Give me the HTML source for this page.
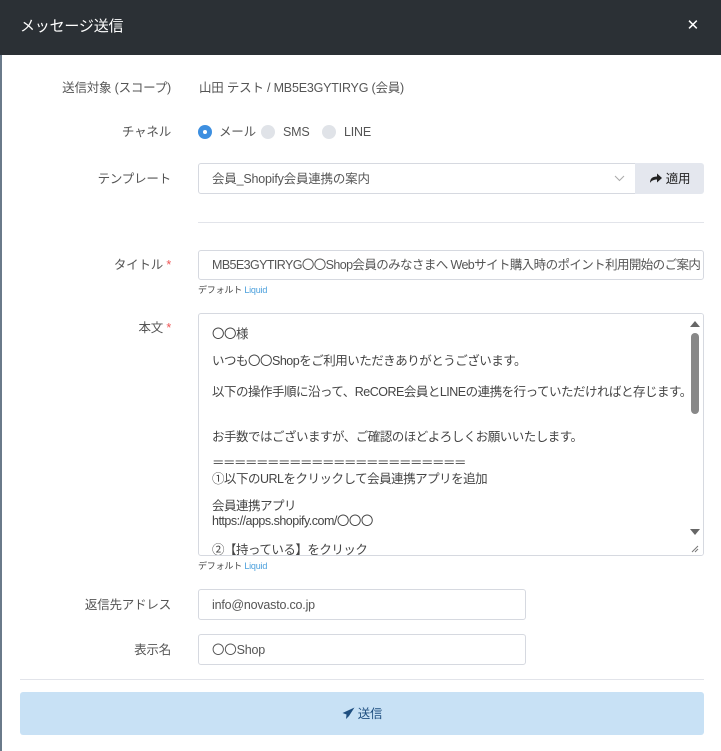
<!DOCTYPE html>
<html><head><meta charset="utf-8"><style>
*{box-sizing:border-box;margin:0;padding:0}
body{width:721px;height:751px;overflow:hidden;background:#fff;font-family:"Liberation Sans","Noto Sans CJK JP",sans-serif;font-size:12.5px;line-height:16px;color:#444;position:relative;letter-spacing:-0.2px}
.abs{position:absolute}
.hdr{left:0;top:0;width:721px;height:55px;background:#2b3035;color:#fff}
.lbl{right:550px;text-align:right;color:#555;white-space:nowrap}
.inp{border:1px solid #d6d9e0;border-radius:3px;background:#fff;padding-left:13px;display:flex;align-items:center;color:#555;overflow:hidden}
.req{color:#e55}
.hint{font-size:9px;color:#444;line-height:10px}
.hint span{color:#4a9fdc}
.ta div{position:absolute;left:13px;white-space:nowrap;color:#444}
</style></head><body>
<div class="abs" style="left:0;top:0;width:2px;height:751px;background:#6a7a8a"></div>
<div class="abs hdr"><div class="abs" style="left:20px;top:19px;font-size:15px">メッセージ送信</div><div class="abs" style="right:22px;top:18px;font-size:15px">✕</div></div>

<div class="abs lbl" style="top:80px">送信対象 (スコープ)</div>
<div class="abs" style="left:199px;top:80px;color:#555">山田 テスト / MB5E3GYTIRYG (会員)</div>

<div class="abs lbl" style="top:124px">チャネル</div>
<div class="abs" style="left:198px;top:125px;width:14px;height:14px;border-radius:50%;background:#3d8fe0"><div style="margin:5px;width:4px;height:4px;border-radius:50%;background:#fff"></div></div>
<div class="abs" style="left:219px;top:124px;color:#555">メール</div>
<div class="abs" style="left:261px;top:125px;width:14px;height:14px;border-radius:50%;background:#e0e3e8"></div>
<div class="abs" style="left:283px;top:124px;color:#555">SMS</div>
<div class="abs" style="left:322px;top:125px;width:14px;height:14px;border-radius:50%;background:#e0e3e8"></div>
<div class="abs" style="left:344px;top:124px;color:#555">LINE</div>

<div class="abs lbl" style="top:171px">テンプレート</div>
<div class="abs inp" style="left:198px;top:163px;width:438px;height:31px;border-radius:3px 0 0 3px">会員_Shopify会員連携の案内
<svg class="abs" style="right:10px;top:11px" width="11" height="7"><path d="M1 1l4.5 4.5L10 1" fill="none" stroke="#aaa"/></svg></div>
<div class="abs" style="left:635px;top:163px;width:69px;height:31px;background:#e4e7ee;border-radius:0 3px 3px 0;color:#222;display:flex;align-items:center;justify-content:center;gap:3px"><svg width="14" height="11" viewBox="0 0 14 11"><path d="M1 10C1 5 4 3.5 8 3.5V0.5L13 5L8 9.5V6.5C5 6.5 2.5 7.5 1 10Z" fill="#222"/></svg>適用</div>
<div class="abs" style="left:198px;top:222px;width:506px;height:1px;background:#e2e4ea"></div>

<div class="abs lbl" style="top:257px">タイトル <span class="req">*</span></div>
<div class="abs inp" style="left:198px;top:250px;width:506px;height:30px;white-space:nowrap;letter-spacing:-0.6px">MB5E3GYTIRYG〇〇Shop会員のみなさまへ Webサイト購入時のポイント利用開始のご案内</div>
<div class="abs hint" style="left:198px;top:285px">デフォルト <span>Liquid</span></div>

<div class="abs lbl" style="top:320px">本文 <span class="req">*</span></div>
<div class="abs inp ta" style="left:198px;top:313px;width:506px;height:243px;letter-spacing:-0.5px">
<div style="top:12px">〇〇様</div>
<div style="top:39px">いつも〇〇Shopをご利用いただきありがとうございます。</div>
<div style="top:70px">以下の操作手順に沿って、ReCORE会員とLINEの連携を行っていただければと存じます。</div>
<div style="top:115px">お手数ではございますが、ご確認のほどよろしくお願いいたします。</div>
<div style="top:141px;letter-spacing:-1.5px">＝＝＝＝＝＝＝＝＝＝＝＝＝＝＝＝＝＝＝＝＝＝＝</div>
<div style="top:157px">①以下のURLをクリックして会員連携アプリを追加</div>
<div style="top:184px">会員連携アプリ</div>
<div style="top:199px">https://apps.shopify.com/〇〇〇</div>
<div style="top:228px">②【持っている】をクリック</div>
<div style="left:488px;top:0;width:16px;height:241px;background:#fff"></div>
<svg class="abs" style="left:491px;top:6px" width="10" height="8"><path d="M0 7L5 1L10 7Z" fill="#666"/></svg>
<div class="abs" style="left:492px;top:19px;width:8px;height:81px;border-radius:4px;background:#888"></div>
<svg class="abs" style="left:491px;top:214px" width="10" height="8"><path d="M0 1L5 7L10 1Z" fill="#666"/></svg>
<svg class="abs" style="left:490px;top:229px" width="10" height="10"><path d="M9 3L3 9M9 6L6 9" stroke="#777"/></svg>
</div>
<div class="abs hint" style="left:198px;top:561px">デフォルト <span>Liquid</span></div>

<div class="abs lbl" style="top:597px">返信先アドレス</div>
<div class="abs inp" style="left:198px;top:589px;width:328px;height:31px">info@novasto.co.jp</div>
<div class="abs lbl" style="top:642px">表示名</div>
<div class="abs inp" style="left:198px;top:634px;width:328px;height:31px">〇〇Shop</div>

<div class="abs" style="left:20px;top:679px;width:684px;height:1px;background:#e2e4ea"></div>
<div class="abs" style="left:20px;top:692px;width:684px;height:43px;background:#c8e1f5;border-radius:3px;display:flex;align-items:center;justify-content:center;color:#1f4f80;gap:3px">
<svg width="13" height="13" viewBox="0 0 13 13"><path d="M12.5 0.5L0.5 6L4.5 7.5L4 12L7 9L12.5 0.5Z" fill="#1f4f80"/></svg>送信</div>
</body></html>
